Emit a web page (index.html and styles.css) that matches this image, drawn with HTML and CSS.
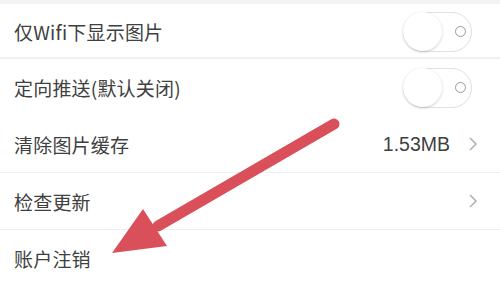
FILE: index.html
```html
<!DOCTYPE html>
<html lang="zh-CN">
<head>
<meta charset="utf-8">
<link rel="stylesheet" href="styles.css">
</head>
<body>
<div class="page">
  <div class="topband"></div>
  <div class="row row-first">
    <span class="label">仅Wifi下显示图片</span>
    <span class="toggle"><span class="knob"></span><span class="ring"></span></span>
  </div>
  <div class="sep sep-thick"></div>
  <div class="row row-tall">
    <span class="label">定向推送(默认关闭)</span>
    <span class="toggle"><span class="knob"></span><span class="ring"></span></span>
  </div>
  <div class="row">
    <span class="label">清除图片缓存</span>
    <span class="right">
      <span class="value">1.53MB</span>
      <svg class="chev" width="10" height="16" viewBox="0 0 10 16"><polyline points="2,2 8,8 2,14" fill="none" stroke="#b0b0b0" stroke-width="1.5"/></svg>
    </span>
  </div>
  <div class="sep"></div>
  <div class="row">
    <span class="label">检查更新</span>
    <span class="right">
      <svg class="chev" width="10" height="16" viewBox="0 0 10 16"><polyline points="2,2 8,8 2,14" fill="none" stroke="#b0b0b0" stroke-width="1.5"/></svg>
    </span>
  </div>
  <div class="sep"></div>
  <div class="row">
    <span class="label">账户注销</span>
  </div>
  <svg class="arrow" width="500" height="284" viewBox="0 0 500 284">
    <line x1="334" y1="124" x2="158" y2="226" stroke="#d9505b" stroke-width="11" stroke-linecap="round"/>
    <polygon points="143,209 167,246 112,253" fill="#d9505b"/>
  </svg>
</div>
</body>
</html>
```
FILE: styles.css
```css
html, body {
  margin: 0;
  padding: 0;
  background: #ffffff;
}
.page {
  position: relative;
  width: 500px;
  height: 284px;
  overflow: hidden;
  font-family: "Noto Sans CJK SC", "Noto Sans", sans-serif;
  color: #404040;
}
.topband {
  height: 4px;
  background: #f3f3f3;
}
.row {
  height: 56px;
  display: flex;
  align-items: center;
  justify-content: space-between;
  padding-left: 14px;
}
.row-first {
  height: 53px;
  padding-top: 2px;
  box-sizing: border-box;
}
.row-tall {
  height: 57px;
}
.label {
  font-size: 19px;
  letter-spacing: 0.2px;
}
.sep {
  height: 1px;
  background: #f0f0f0;
}
.sep-thick {
  height: 2px;
}
.toggle {
  position: relative;
  width: 69px;
  height: 40px;
  box-sizing: border-box;
  border: 1.5px solid #e0e0e0;
  border-radius: 20px;
  margin-right: 28px;
  background: #fff;
}
.knob {
  position: absolute;
  left: -1px;
  top: -1px;
  width: 39px;
  height: 39px;
  border-radius: 50%;
  background: #fff;
  box-shadow: 0 1px 3px rgba(0,0,0,0.2);
}
.ring {
  position: absolute;
  left: 51px;
  top: 13px;
  width: 11px;
  height: 11px;
  box-sizing: border-box;
  border: 1.5px solid #9a9a9a;
  border-radius: 50%;
}
.right {
  display: flex;
  align-items: center;
  margin-right: 22px;
}
.value {
  font-size: 19.5px;
  color: #404040;
  margin-right: 18px;
  font-family: "Liberation Sans", "Noto Sans CJK SC", sans-serif;
}
.chev {
  display: block;
}
.arrow {
  position: absolute;
  left: 0;
  top: 0;
}
```
